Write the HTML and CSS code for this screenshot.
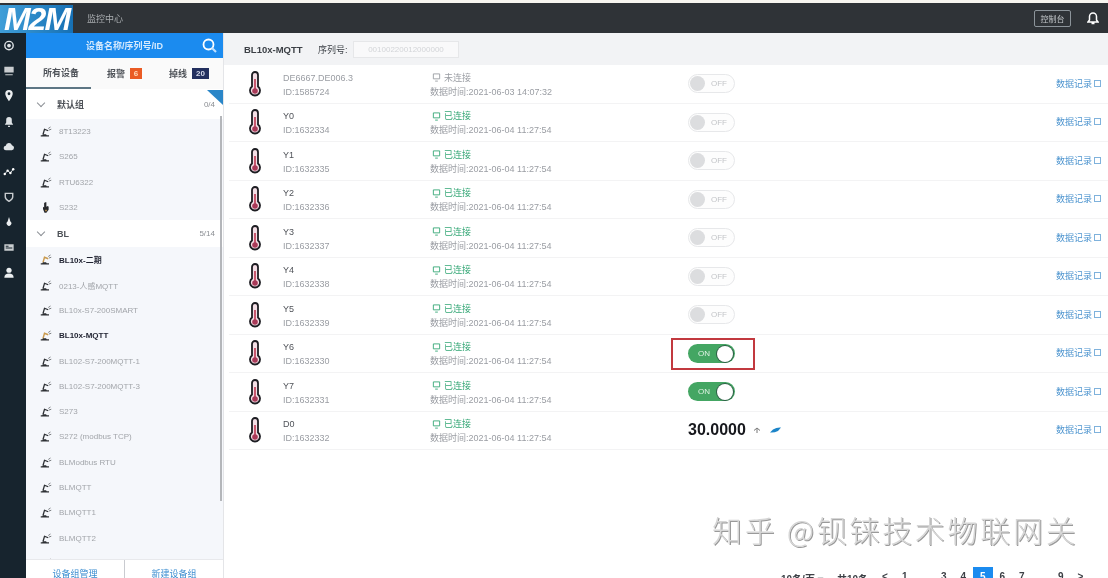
FILE: index.html
```html
<!DOCTYPE html>
<html lang="zh-CN">
<head>
    <meta charset="UTF-8">
    <meta name="viewport" content="width=device-width, initial-scale=1.0">
    <title>监控中心</title>
    <link rel="stylesheet" href="styles.css">
</head>
<body>

<svg class="sprites" width="0" height="0">
    <symbol id="thermo" viewBox="0 0 12 26">
        <path d="M3 15.500V4a3 3 0 0 1 6 0v11.500a5 5 0 1 1-6 0z" fill="#f4dfe6" stroke="#1d1d22" stroke-width="1.800"/>
        <rect x="5" y="8" width="2" height="10" fill="#c8586f"/>
        <circle cx="6" cy="20" r="2.800" fill="#a83a58"/>
    </symbol>
    <symbol id="arm" viewBox="0 0 16 14">
        <path d="M4 11l2-7 5 2" fill="none" stroke="#2c2f33" stroke-width="1.700"/>
        <path d="M1 13.500h11V12H9l-1-1.500H4L3 12H1z" fill="#2c2f33"/>
        <path d="M11 3l3-2M12 5l3-1" stroke="#55595e" stroke-width="1"/>
    </symbol>
    <symbol id="arm-on" viewBox="0 0 16 14">
        <path d="M4 11l2-7 5 2" fill="none" stroke="#c99a4e" stroke-width="1.900"/>
        <path d="M1 13.500h11V12H9l-1-1.500H4L3 12H1z" fill="#2c2f33"/>
        <path d="M11 3l3-2M12 5l3-1" stroke="#55595e" stroke-width="1"/>
    </symbol>
    <symbol id="hand" viewBox="0 0 16 14">
        <path d="M7 0h1.500v6l2-1 1 1v4l-3 4H6L4 9V6l1.500 1V1z" fill="#26282c"/>
        <path d="M7 10h2v2H7z" fill="#c99a4e"/>
    </symbol>
    <symbol id="monitor" viewBox="0 0 10 10">
        <path d="M1.500 1h7v5.500h-7zM3.500 9h3" fill="none" stroke="currentColor" stroke-width="1"/>
    </symbol>
</svg>

<div class="app">
    <header class="topbar">
        <div class="logo">M2M</div>
        <div class="topbar-title">监控中心</div>
        <button class="console-btn">控制台</button>
        <svg class="bell" width="12" height="13" viewBox="0 0 12 13"><path d="M6 1a3.500 3.500 0 0 0-3.500 3.500V8L1 10h10L9.500 8V4.500A3.500 3.500 0 0 0 6 1zM4.500 11.500h3" fill="none" stroke="#fff" stroke-width="1.500"/></svg>
    </header>

    <div class="body">
        <nav class="rail">
            <svg viewBox="0 0 12 12"><circle cx="6" cy="6" r="4.500" fill="none" stroke="#dfe3e6" stroke-width="1.500"/><circle cx="6" cy="6" r="2" fill="#dfe3e6"/></svg>
            <svg viewBox="0 0 12 12"><path d="M1 2h10v6H1zM2 10h8v1H2z" fill="#c9cdd0"/></svg>
            <svg viewBox="0 0 12 12"><path fill-rule="evenodd" d="M6 0a4 4 0 0 1 4 4c0 3-4 8-4 8S2 7 2 4a4 4 0 0 1 4-4zm0 2.500a1.500 1.500 0 1 0 0 3 1.500 1.500 0 0 0 0-3z" fill="#eceff1"/></svg>
            <svg viewBox="0 0 12 12"><path d="M6 1a3 3 0 0 0-3 3v3L1.500 9.500h9L9 7V4a3 3 0 0 0-3-3zM5 10.500h2V12H5z" fill="#dfe3e6"/></svg>
            <svg viewBox="0 0 12 12"><path d="M3 10a2.500 2.500 0 0 1-.5-5 3.500 3.500 0 0 1 6.700-.5A2.800 2.800 0 0 1 9 10z" fill="#dfe3e6"/></svg>
            <svg viewBox="0 0 12 12"><path d="M1.500 8.500L4.500 5l3 2.500 3-4" fill="none" stroke="#dfe3e6" stroke-width="1"/><circle cx="1.500" cy="8.500" r="1.300" fill="#fff"/><circle cx="4.500" cy="5" r="1.300" fill="#fff"/><circle cx="7.500" cy="7.500" r="1.300" fill="#fff"/><circle cx="10.500" cy="3.500" r="1.300" fill="#fff"/></svg>
            <svg viewBox="0 0 12 12"><path d="M2 2.500h8v4c0 2-2 3.500-4 4.500-2-1-4-2.500-4-4.500z" fill="none" stroke="#c9cdd0" stroke-width="1.500"/></svg>
            <svg viewBox="0 0 12 12"><path d="M6 1l1.500 5a2.500 2.500 0 1 1-3 0z" fill="#eceff1"/></svg>
            <svg viewBox="0 0 12 12"><path fill-rule="evenodd" d="M1 2.500h10v7H1zM2.500 4v1h3V4zm0 2v1h7V6z" fill="#c9cdd0"/></svg>
            <svg viewBox="0 0 12 12"><circle cx="6" cy="3.500" r="2.800" fill="#eceff1"/><path d="M1 11.500c0-3 2-4.500 5-4.500s5 1.500 5 4.500z" fill="#eceff1"/></svg>
        </nav>

        <aside class="sidebar">
            <div class="side-head">
                <span>设备名称/序列号/ID</span>
                <svg class="side-search" width="17" height="17" viewBox="0 0 17 17"><circle cx="7.500" cy="7.500" r="5" fill="none" stroke="#fff" stroke-width="1.800"/><path d="M11 11l4 4" stroke="#bfe0ff" stroke-width="2.200"/></svg>
            </div>
            <div class="tabs">
                <div class="tab tab-active">所有设备</div>
                <div class="tab tab-alarm">报警 <span class="badge badge-orange">6</span></div>
                <div class="tab tab-offline">掉线 <span class="badge badge-navy">20</span></div>
            </div>
            <div class="tree">
                <span class="corner-tag"></span>
                <div class="group first-group"><span class="chev"></span><b>默认组</b><em>0/4</em></div>
                <div class="item"><svg><use href="#arm"/></svg>8T13223</div>
                <div class="item"><svg><use href="#arm"/></svg>S265</div>
                <div class="item"><svg><use href="#arm"/></svg>RTU6322</div>
                <div class="item"><svg class="hand"><use href="#hand"/></svg>S232</div>
                <div class="group"><span class="chev"></span><b>BL</b><em>5/14</em></div>
                <div class="item item-on"><svg><use href="#arm-on"/></svg>BL10x-二期</div>
                <div class="item"><svg><use href="#arm"/></svg>0213-人感MQTT</div>
                <div class="item"><svg><use href="#arm"/></svg>BL10x-S7-200SMART</div>
                <div class="item item-on"><svg><use href="#arm-on"/></svg>BL10x-MQTT</div>
                <div class="item"><svg><use href="#arm"/></svg>BL102-S7-200MQTT-1</div>
                <div class="item"><svg><use href="#arm"/></svg>BL102-S7-200MQTT-3</div>
                <div class="item"><svg><use href="#arm"/></svg>S273</div>
                <div class="item"><svg><use href="#arm"/></svg>S272 (modbus TCP)</div>
                <div class="item"><svg><use href="#arm"/></svg>BLModbus RTU</div>
                <div class="item"><svg><use href="#arm"/></svg>BLMQTT</div>
                <div class="item"><svg><use href="#arm"/></svg>BLMQTT1</div>
                <div class="item"><svg><use href="#arm"/></svg>BLMQTT2</div>
                <div class="item"><svg><use href="#arm"/></svg>BL102-S7-200MQTT-4</div>
            </div>
            <div class="side-foot">
                <a>设备组管理</a>
                <a>新建设备组</a>
            </div>
        </aside>

        <main class="main">
            <div class="main-head">
                <b>BL10x-MQTT</b>
                <span class="serial-label">序列号:</span>
                <span class="serial-box">00100220012000000</span>
            </div>

            <div class="rows">
                <div class="row">
                    <svg class="thermo"><use href="#thermo"/></svg>
                    <div class="info"><div>DE6667.DE006.3</div><div>ID:1585724</div></div>
                    <div class="state"><div class="off-line"><svg><use href="#monitor"/></svg>未连接</div><div>数据时间:2021-06-03 14:07:32</div></div>
                    <div class="ctrl"><span class="switch">OFF</span></div>
                    <a class="history">数据记录</a>
                </div>
                <div class="row">
                    <svg class="thermo"><use href="#thermo"/></svg>
                    <div class="info"><div class="dark">Y0</div><div>ID:1632334</div></div>
                    <div class="state"><div class="on-line"><svg><use href="#monitor"/></svg>已连接</div><div>数据时间:2021-06-04 11:27:54</div></div>
                    <div class="ctrl"><span class="switch">OFF</span></div>
                    <a class="history">数据记录</a>
                </div>
                <div class="row">
                    <svg class="thermo"><use href="#thermo"/></svg>
                    <div class="info"><div class="dark">Y1</div><div>ID:1632335</div></div>
                    <div class="state"><div class="on-line"><svg><use href="#monitor"/></svg>已连接</div><div>数据时间:2021-06-04 11:27:54</div></div>
                    <div class="ctrl"><span class="switch">OFF</span></div>
                    <a class="history">数据记录</a>
                </div>
                <div class="row">
                    <svg class="thermo"><use href="#thermo"/></svg>
                    <div class="info"><div class="dark">Y2</div><div>ID:1632336</div></div>
                    <div class="state"><div class="on-line"><svg><use href="#monitor"/></svg>已连接</div><div>数据时间:2021-06-04 11:27:54</div></div>
                    <div class="ctrl"><span class="switch">OFF</span></div>
                    <a class="history">数据记录</a>
                </div>
                <div class="row">
                    <svg class="thermo"><use href="#thermo"/></svg>
                    <div class="info"><div class="dark">Y3</div><div>ID:1632337</div></div>
                    <div class="state"><div class="on-line"><svg><use href="#monitor"/></svg>已连接</div><div>数据时间:2021-06-04 11:27:54</div></div>
                    <div class="ctrl"><span class="switch">OFF</span></div>
                    <a class="history">数据记录</a>
                </div>
                <div class="row">
                    <svg class="thermo"><use href="#thermo"/></svg>
                    <div class="info"><div class="dark">Y4</div><div>ID:1632338</div></div>
                    <div class="state"><div class="on-line"><svg><use href="#monitor"/></svg>已连接</div><div>数据时间:2021-06-04 11:27:54</div></div>
                    <div class="ctrl"><span class="switch">OFF</span></div>
                    <a class="history">数据记录</a>
                </div>
                <div class="row">
                    <svg class="thermo"><use href="#thermo"/></svg>
                    <div class="info"><div class="dark">Y5</div><div>ID:1632339</div></div>
                    <div class="state"><div class="on-line"><svg><use href="#monitor"/></svg>已连接</div><div>数据时间:2021-06-04 11:27:54</div></div>
                    <div class="ctrl"><span class="switch">OFF</span></div>
                    <a class="history">数据记录</a>
                </div>
                <div class="row">
                    <svg class="thermo"><use href="#thermo"/></svg>
                    <div class="info"><div class="dark">Y6</div><div>ID:1632330</div></div>
                    <div class="state"><div class="on-line"><svg><use href="#monitor"/></svg>已连接</div><div>数据时间:2021-06-04 11:27:54</div></div>
                    <div class="ctrl"><span class="switch switch-on switch-marked">ON</span></div>
                    <a class="history">数据记录</a>
                </div>
                <div class="row">
                    <svg class="thermo"><use href="#thermo"/></svg>
                    <div class="info"><div class="dark">Y7</div><div>ID:1632331</div></div>
                    <div class="state"><div class="on-line"><svg><use href="#monitor"/></svg>已连接</div><div>数据时间:2021-06-04 11:27:54</div></div>
                    <div class="ctrl"><span class="switch switch-on">ON</span></div>
                    <a class="history">数据记录</a>
                </div>
                <div class="row">
                    <svg class="thermo"><use href="#thermo"/></svg>
                    <div class="info"><div class="dark">D0</div><div>ID:1632332</div></div>
                    <div class="state"><div class="on-line"><svg><use href="#monitor"/></svg>已连接</div><div>数据时间:2021-06-04 11:27:54</div></div>
                    <div class="ctrl value">
                        30.0000
                        <svg class="up" width="8" height="8" viewBox="0 0 8 8"><path d="M1 4.500L4 2l3 2.500M4 3v4" fill="none" stroke="#777" stroke-width="1"/></svg>
                        <svg class="pencil" width="11" height="7" viewBox="0 0 11 7"><path d="M0 5.500L3 2.500Q7 0 11 .5L8 4Q4 6 0 5.500z" fill="#1c84c8"/></svg>
                    </div>
                    <a class="history">数据记录</a>
                </div>
            </div>

            <div class="pager">
                <span class="page-size">10条/页 ▾</span>
                <span class="page-total">共10条</span>
                <span class="page-arrow">&lt;</span>
                <span class="page-num">1</span>
                <span class="page-num page-skip">3</span>
                <span class="page-num">4</span>
                <span class="page-num page-current">5</span>
                <span class="page-num">6</span>
                <span class="page-num">7</span>
                <span class="page-num page-skip">9</span>
                <span class="page-arrow">&gt;</span>
            </div>
        </main>
    </div>

    <div class="watermark">知乎 @钡铼技术物联网关</div>
</div>

</body>
</html>
```

FILE: styles.css
```css
*, *::before, *::after {
    box-sizing: border-box;
}
html, body {
    margin: 0;
    height: 100%;
    overflow: hidden;
}
body {
    font-family: "Liberation Sans", "Noto Sans CJK SC", sans-serif;
    font-size: 9px;
    color: #9a9da3;
    background-color: #fff;
}
.sprites {
    position: absolute;
}
/* the whole shot is a soft, rescaled capture */
.app {
    position: relative;
    height: 578px;
    display: flex;
    flex-direction: column;
    overflow: hidden;
    padding-top: 3px;
    background-color: #f7f5ef;
    filter: blur(.5px);
}

/* top bar */
.topbar {
    height: 30px;
    flex: none;
    display: flex;
    align-items: center;
    background-color: #2f3337;
    padding-right: 9px;
}
.logo {
    width: 73px;
    height: 28px;
    margin-top: 2px;
    background: linear-gradient(90deg, #3f9ed8, #1670b4);
    color: #fff;
    font: italic bold 32px/28px "Liberation Sans", sans-serif;
    letter-spacing: -2px;
    text-align: center;
}
.topbar-title {
    margin-left: 14px;
    font-size: 9px;
    color: #a9adb0;
}
.console-btn {
    margin-left: auto;
    width: 37px;
    height: 17px;
    padding: 0;
    border: 1px solid #8c949a;
    border-radius: 2px;
    background: none;
    color: #c3c7ca;
    font-family: inherit;
    font-size: 8px;
}
.bell {
    margin-left: 16px;
}

.body {
    flex: 1;
    display: flex;
    min-height: 0;
}

/* icon rail */
.rail {
    width: 26px;
    flex: none;
    display: flex;
    flex-direction: column;
    gap: 14px;
    padding: 7px 0 0 3px;
    background-color: #17242e;
}
.rail svg {
    width: 12px;
    height: 11.200px;
    display: block;
}

/* device tree */
.sidebar {
    width: 198px;
    flex: none;
    display: flex;
    flex-direction: column;
    background-color: #f5f7fb;
    border-right: 1px solid #e4e5e8;
}
.side-head {
    height: 25px;
    flex: none;
    display: flex;
    align-items: center;
    justify-content: center;
    position: relative;
    background-color: #1b8bef;
    color: #d4e9fd;
    font-size: 9px;
    font-weight: bold;
}
.side-search {
    position: absolute;
    right: 5px;
    top: 4px;
}
.tabs {
    height: 31px;
    flex: none;
    display: flex;
    align-items: center;
    background-color: #fafafa;
    color: #4e5258;
    font-size: 9px;
    font-weight: bold;
}
.tab {
    height: 100%;
    display: flex;
    align-items: center;
    gap: 5px;
    white-space: nowrap;
}
.tab-active {
    width: 65px;
    justify-content: center;
    padding-left: 5px;
    border-bottom: 2px solid #5d7684;
}
.tab-alarm {
    margin-left: 16px;
}
.tab-offline {
    margin-left: 27px;
}
.badge {
    height: 11px;
    padding: 0 3px;
    min-width: 12px;
    color: #ffd9b8;
    font-size: 8px;
    line-height: 11px;
    text-align: center;
}
.badge-orange {
    background-color: #ea5b24;
}
.badge-navy {
    min-width: 17px;
    background-color: #23305f;
    color: #d4d9ea;
}
.tree {
    position: relative;
    flex: 1;
    min-height: 0;
    overflow: hidden;
}
.tree::after {
    content: "";
    position: absolute;
    top: 27px;
    right: 1px;
    width: 2px;
    height: 385px;
    background-color: #b4b6ba;
}
.corner-tag {
    position: absolute;
    top: 1px;
    right: 0;
    width: 0;
    height: 0;
    border-top: 15px solid #2a86c8;
    border-left: 16px solid transparent;
    z-index: 1;
}
.group {
    height: 27px;
    display: flex;
    align-items: center;
    padding: 0 8px 0 12px;
    background-color: #fff;
    color: #4e5258;
}
.first-group {
    height: 30px;
}
.group b {
    margin-left: 13px;
    font-size: 9px;
}
.group em {
    margin-left: auto;
    font-style: normal;
    color: #8b8e93;
    font-size: 8px;
}
.chev {
    width: 6px;
    height: 6px;
    margin-top: -3px;
    border-right: 1px solid #8c9096;
    border-bottom: 1px solid #8c9096;
    transform: rotate(45deg);
}
.item {
    height: 25.300px;
    display: flex;
    align-items: center;
    gap: 7px;
    padding-left: 14px;
    color: #a2a5aa;
    font-size: 8px;
}
.item svg {
    width: 12px;
    height: 11px;
    flex: none;
}
.item svg.hand {
    height: 15px;
}
.item-on {
    color: #1f2230;
    font-weight: bold;
}
.side-foot {
    height: 19px;
    flex: none;
    display: flex;
    background-color: #fff;
    border-top: 1px solid #e8e9ec;
    color: #3b8dd0;
    font-size: 9px;
    line-height: 29px;
}
.side-foot a {
    flex: 1;
    text-align: center;
}
.side-foot a + a {
    border-left: 1px solid #c9cbd0;
}

/* right part */
.main {
    flex: 1;
    min-width: 0;
    padding-left: 5px;
    background-color: #fff;
}
.main-head {
    height: 32px;
    display: flex;
    align-items: center;
    margin-left: -5px;
    padding-left: 20px;
    background-color: #f2f3f5;
    color: #3c4046;
    font-size: 9px;
}
.main-head b {
    font-size: 9.500px;
    width: 74px;
}
.serial-label {
    width: 35px;
}
.serial-box {
    width: 106px;
    height: 17px;
    background-color: #f9f9fa;
    border: 1px solid #e6e7e9;
    color: #d3d5d8;
    font-size: 8px;
    line-height: 15px;
    text-align: center;
}
.row {
    height: 38.500px;
    display: grid;
    grid-template-columns: 54px 147px 258px 1fr auto;
    align-items: center;
    border-bottom: 1px solid #f3f3f4;
    padding-right: 7px;
    line-height: 14px;
}
.thermo {
    width: 12px;
    height: 26px;
    margin-left: 20px;
}
.info, .state {
    padding-top: 2px;
}
.dark {
    color: #505359;
}
.off-line, .on-line {
    display: flex;
    align-items: center;
    gap: 3px;
    padding-left: 2px;
}
.off-line svg, .on-line svg {
    width: 9px;
    height: 9px;
}
.on-line {
    color: #35a776;
}
.switch {
    position: relative;
    display: block;
    width: 47px;
    height: 19px;
    border: 1px solid #e7e8ea;
    border-radius: 10px;
    background-color: #fdfdfd;
    color: #c3c5c8;
    font-size: 8px;
    line-height: 17px;
    padding-left: 22px;
}
.switch::before {
    content: "";
    position: absolute;
    top: 1px;
    left: 1px;
    width: 15px;
    height: 15px;
    border-radius: 50%;
    background-color: #dcdddf;
}
.switch-on {
    border: none;
    background-color: #44a663;
    color: #dff3e4;
    line-height: 19px;
    padding-left: 10px;
}
.switch-on::before {
    top: 2px;
    left: 29px;
    width: 16px;
    height: 16px;
    background-color: #fff;
    box-shadow: 0 0 0 1px #2f5f47;
}
.switch-marked::after {
    content: "";
    position: absolute;
    top: -6px;
    left: -17px;
    width: 84px;
    height: 32px;
    border: 2px solid #c2393f;
}
.value {
    display: flex;
    align-items: center;
    color: #17181d;
    font-size: 16px;
    font-weight: bold;
}
.up {
    margin-left: 7px;
}
.pencil {
    margin-left: 9px;
}
.history {
    color: #4e95cf;
    font-size: 9px;
}
.history::after {
    content: "";
    display: inline-block;
    width: 7px;
    height: 7px;
    margin-left: 2px;
    border: 1px solid #7fb2dc;
}
.pager {
    display: flex;
    align-items: flex-start;
    height: 20px;
    margin-top: 117px;
    padding-left: 552px;
    color: #3d4046;
    font-size: 10px;
    font-weight: bold;
}
.page-size {
    width: 56px;
    padding-top: 4px;
}
.page-total {
    width: 38px;
    padding-top: 4px;
}
.page-arrow {
    width: 20px;
    text-align: center;
    padding-top: 4px;
}
.page-num {
    width: 19.500px;
    text-align: center;
    padding-top: 4px;
}
.page-skip {
    margin-left: 19.500px;
}
.page-current {
    height: 19px;
    background-color: #1b8bef;
    color: #fff;
}

.watermark {
    position: absolute;
    left: 712px;
    top: 509px;
    font-family: "Noto Sans CJK SC", sans-serif;
    font-size: 30px;
    font-weight: 300;
    line-height: 40px;
    letter-spacing: 2.700px;
    white-space: nowrap;
    color: #d6d6d6;
    text-shadow: 1px 1px 0 #9a9a9a;
}
```
